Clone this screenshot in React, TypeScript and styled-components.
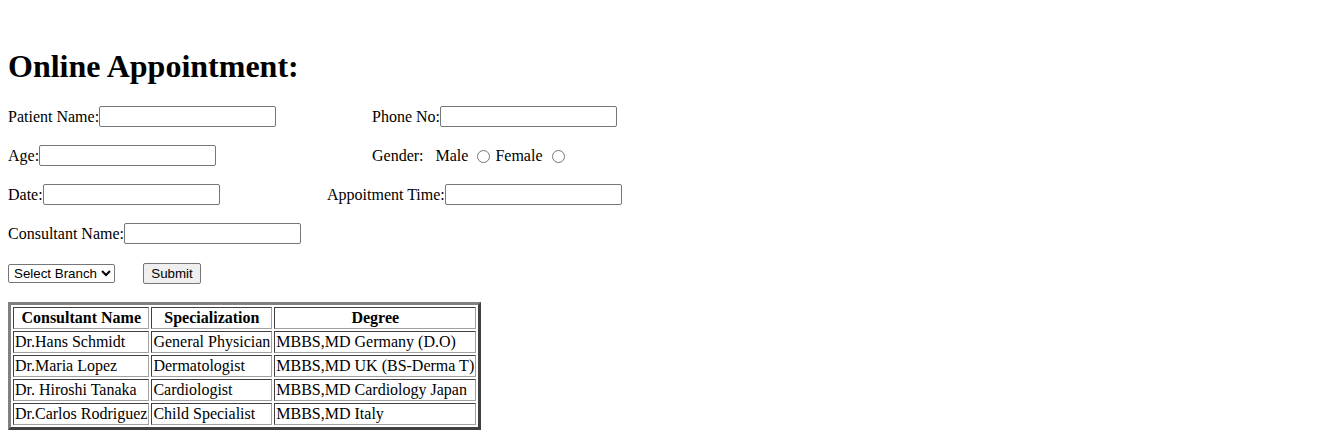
import React from "react";
import styled, { createGlobalStyle } from "styled-components";

const Global = createGlobalStyle`
  html, body { margin: 0; padding: 0; background: #fff; }
  body {
    padding: 8px;
    font-family: "Liberation Serif", "Times New Roman", serif;
    font-size: 16px;
    color: #000;
  }
`;

const Page = styled.div`
  display: flex;
  flex-direction: column;
`;

const Title = styled.h1`
  font-size: 32px;
  font-weight: bold;
  margin: 40px 0 21px 0;
  line-height: 37px;
`;

const Form = styled.form`
  display: flex;
  flex-direction: column;
  gap: 18px;
`;

const Row = styled.div<{ $left?: number }>`
  display: grid;
  grid-template-columns: ${(p) => (p.$left ? `${p.$left}px auto` : "auto")};
  justify-content: start;
  align-items: center;
  height: 21px;
`;

const Field = styled.label`
  display: flex;
  align-items: center;
  white-space: pre;
  padding-top: 1px;
`;

const TextInput = styled.input`
  box-sizing: border-box;
  width: 177px;
  height: 21px;
  margin-top: -1px;
  border: 1px solid #767676;
  border-radius: 2px;
  padding: 1px 2px;
  font-family: "Liberation Sans", Arial, sans-serif;
  font-size: 13.33px;
  background: #fff;
`;

const Radio = styled.input`
  width: 13px;
  height: 13px;
  margin: 0 5px 0 5px;
`;

const GenderLabel = styled.span`
  margin-right: 12px;
`;

const Controls = styled.div`
  display: flex;
  align-items: center;
  gap: 28px;
  height: 21px;
  margin-top: 1px;
`;

const Select = styled.select`
  box-sizing: border-box;
  width: 107px;
  height: 19px;
  font-family: "Liberation Sans", Arial, sans-serif;
  font-size: 13.33px;
  border: 1px solid #767676;
  border-radius: 2px;
  background: #fff;
  color: #000;
  padding: 0 0 0 1px;
`;

const Button = styled.button`
  box-sizing: border-box;
  width: 58px;
  height: 21px;
  font-family: "Liberation Sans", Arial, sans-serif;
  font-size: 13.33px;
  border: 1px solid #767676;
  border-radius: 2px;
  background: #efefef;
  color: #000;
  padding: 1px 6px;
`;

const Table = styled.table`
  margin-top: 18px;
  align-self: flex-start;
  border-collapse: separate;
  border-spacing: 2px;
  border-width: 3px;
  border-style: solid;
  border-color: #808080 #404040 #404040 #808080;
  font-family: "Liberation Serif", "Times New Roman", serif;
  font-size: 16px;
`;

const Th = styled.th`
  padding: 1px;
  border-width: 1px;
  border-style: solid;
  border-color: #404040 #a0a0a0 #a0a0a0 #404040;
  font-weight: bold;
  text-align: center;
  white-space: nowrap;
`;

const Td = styled.td`
  padding: 1px;
  border-width: 1px;
  border-style: solid;
  border-color: #404040 #a0a0a0 #a0a0a0 #404040;
  white-space: nowrap;
`;

const doctors = [
  ["Dr.Hans Schmidt", "General Physician", "MBBS,MD Germany (D.O)"],
  ["Dr.Maria Lopez", "Dermatologist", "MBBS,MD UK (BS-Derma T)"],
  ["Dr. Hiroshi Tanaka", "Cardiologist", "MBBS,MD Cardiology Japan"],
  ["Dr.Carlos Rodriguez", "Child Specialist", "MBBS,MD Italy"],
];

export default function App() {
  return (
    <>
      <Global />
      <Page>
        <Title>Online Appointment:</Title>
        <Form onSubmit={(e) => e.preventDefault()}>
          <Row $left={364}>
            <Field>
              Patient Name:<TextInput type="text" />
            </Field>
            <Field>
              Phone No:<TextInput type="text" />
            </Field>
          </Row>
          <Row $left={364}>
            <Field>
              Age:<TextInput type="text" />
            </Field>
            <Field as="div">
              <GenderLabel>Gender:</GenderLabel>
              Male <Radio type="radio" name="gender" />
              Female <Radio type="radio" name="gender" />
            </Field>
          </Row>
          <Row $left={319}>
            <Field>
              Date:<TextInput type="text" />
            </Field>
            <Field>
              Appoitment Time:<TextInput type="text" />
            </Field>
          </Row>
          <Row>
            <Field>
              Consultant Name:<TextInput type="text" />
            </Field>
          </Row>
          <Controls>
            <Select defaultValue="">
              <option value="">Select Branch</option>
            </Select>
            <Button type="submit">Submit</Button>
          </Controls>
        </Form>
        <Table>
          <thead>
            <tr>
              <Th>Consultant Name</Th>
              <Th>Specialization</Th>
              <Th>Degree</Th>
            </tr>
          </thead>
          <tbody>
            {doctors.map((d) => (
              <tr key={d[0]}>
                {d.map((c) => (
                  <Td key={c}>{c}</Td>
                ))}
              </tr>
            ))}
          </tbody>
        </Table>
      </Page>
    </>
  );
}
